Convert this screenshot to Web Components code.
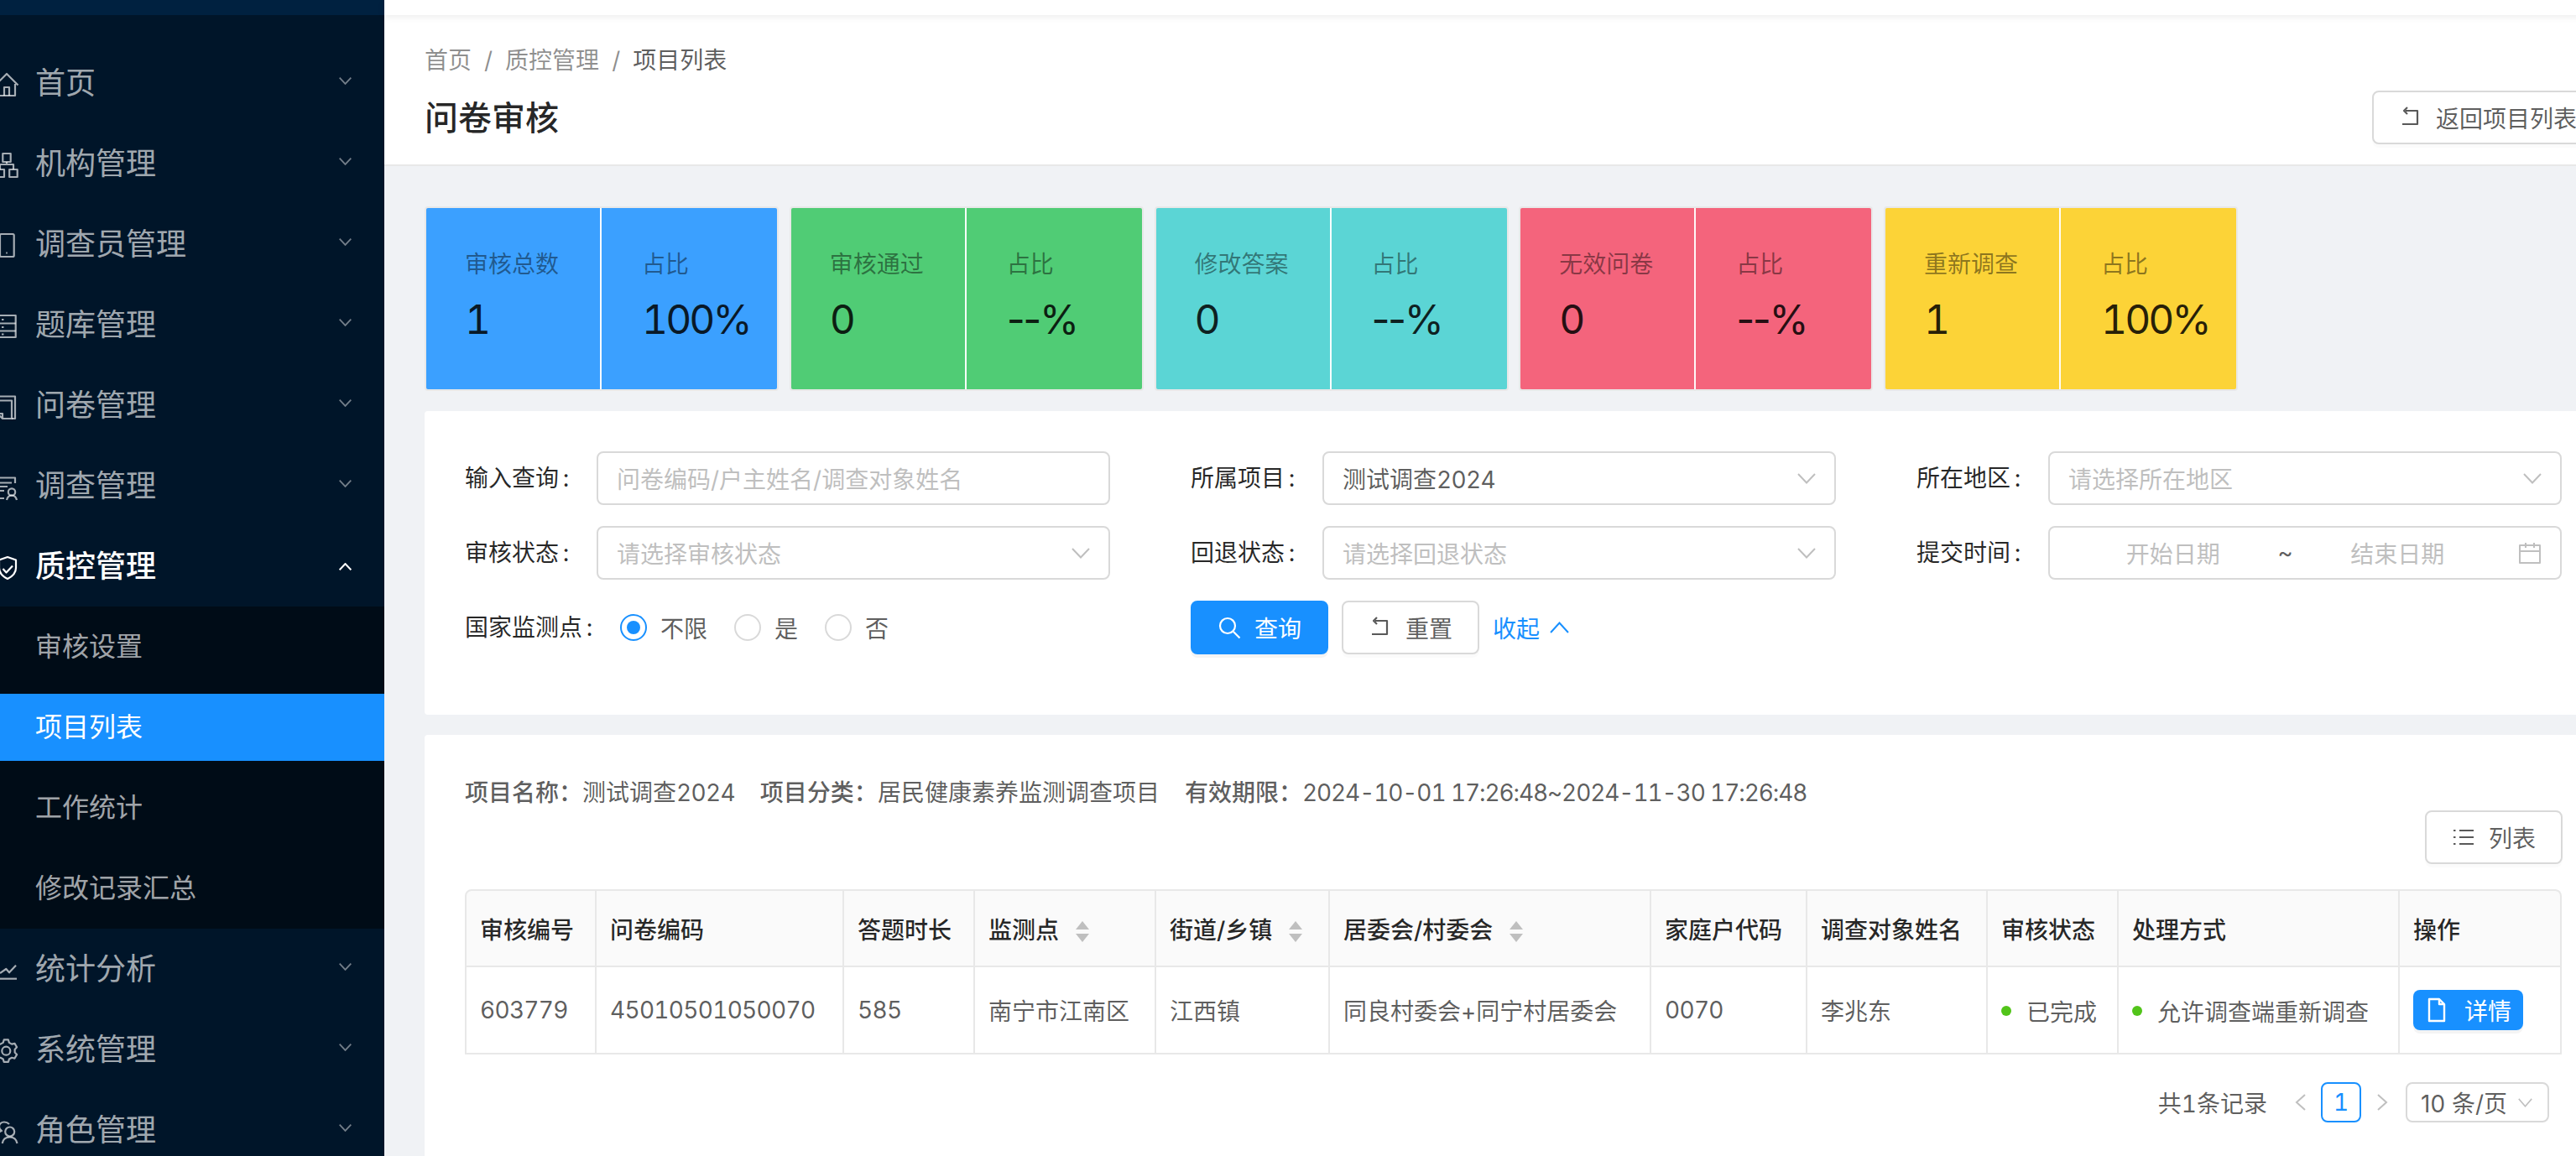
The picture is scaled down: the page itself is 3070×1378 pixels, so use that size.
<!DOCTYPE html>
<html lang="zh-CN">
<head>
<meta charset="utf-8">
<title>问卷审核</title>
<style>
html,body{margin:0;padding:0;width:3070px;height:1378px;overflow:hidden;background:#f0f2f5}
body{font-family:Inter,"Noto Sans CJK SC",sans-serif;font-size:28px;color:rgba(0,0,0,.65);font-variant-numeric:tabular-nums}
</style>
</head>
<body>
<app-shell>
  <side-nav slot="nav">
    <nav-item icon="home">首页</nav-item>
    <nav-item icon="cluster">机构管理</nav-item>
    <nav-item icon="tablet">调查员管理</nav-item>
    <nav-item icon="database">题库管理</nav-item>
    <nav-item icon="snippets">问卷管理</nav-item>
    <nav-item icon="solution">调查管理</nav-item>
    <nav-item icon="shield" open>质控管理</nav-item>
    <sub-menu>
      <sub-item>审核设置</sub-item>
      <sub-item active>项目列表</sub-item>
      <sub-item>工作统计</sub-item>
      <sub-item>修改记录汇总</sub-item>
    </sub-menu>
    <nav-item icon="chart">统计分析</nav-item>
    <nav-item icon="gear">系统管理</nav-item>
    <nav-item icon="team">角色管理</nav-item>
  </side-nav>
  <page-head>
    <span slot="c1">首页</span><span slot="c2">质控管理</span><span slot="c3">项目列表</span>
    <span slot="title">问卷审核</span>
    <ui-button slot="action" icon="rollback">返回项目列表</ui-button>
  </page-head>
  <stat-row>
    <stat-card color="#3ba0ff" label="审核总数" value="1" pct="100%"></stat-card>
    <stat-card color="#50cc75" label="审核通过" value="0" pct="--%"></stat-card>
    <stat-card color="#5bd5d5" label="修改答案" value="0" pct="--%"></stat-card>
    <stat-card color="#f4647c" label="无效问卷" value="0" pct="--%"></stat-card>
    <stat-card color="#fcd337" label="重新调查" value="1" pct="100%"></stat-card>
  </stat-row>
  <filter-panel>
    <form-field label="输入查询"><field-box placeholder>问卷编码/户主姓名/调查对象姓名</field-box></form-field>
    <form-field label="所属项目"><field-box arrow>测试调查<num-t>2024</num-t></field-box></form-field>
    <form-field label="所在地区"><field-box arrow placeholder>请选择所在地区</field-box></form-field>
    <form-field label="审核状态"><field-box arrow placeholder>请选择审核状态</field-box></form-field>
    <form-field label="回退状态"><field-box arrow placeholder>请选择回退状态</field-box></form-field>
    <form-field label="提交时间"><date-range></date-range></form-field>
    <form-field label="国家监测点"><radio-opt checked>不限</radio-opt><radio-opt>是</radio-opt><radio-opt>否</radio-opt></form-field>
    <action-row>
      <ui-button primary icon="search">查询</ui-button>
      <ui-button icon="rollback">重置</ui-button>
      <collapse-link>收起</collapse-link>
    </action-row>
  </filter-panel>
  <result-panel>
    <info-line slot="info">
      <info-pair label="项目名称：">测试调查<num-t>2024</num-t></info-pair>
      <info-pair label="项目分类：">居民健康素养监测调查项目</info-pair>
      <info-pair label="有效期限："><num-t style="--ls:-1.100px">2024-10-01 17:26:48~2024-11-30 17:26:48</num-t></info-pair>
    </info-line>
    <ui-button slot="tool" icon="list">列表</ui-button>
    <data-table slot="table"></data-table>
    <page-bar slot="pager"></page-bar>
  </result-panel>
</app-shell>

<script>
function gearPath(cx,cy){
  const pt=(r,d)=>{const a=d*Math.PI/180;return (cx+r*Math.cos(a)).toFixed(2)+' '+(cy+r*Math.sin(a)).toFixed(2);};
  let d='';
  for(let i=0;i<6;i++){
    const a=30+i*60;
    d+=(i?'L':'M')+pt(10.5,a-20)+'L'+pt(13.5,a-11)+'L'+pt(13.5,a+11)+'L'+pt(10.5,a+20);
  }
  return '<path d="'+d+'Z"/><circle cx="'+cx+'" cy="'+cy+'" r="5"/>';
}
const ICONS = {
  home:'<path d="M.5 16.500 14 3l13.500 13.500"/><path d="M3.500 15v14h20.500V15"/><path d="M11 29v-10h6v10"/>',
  cluster:'<rect x="9.300" y="2" width="9.400" height="10"/><rect x="1.500" y="21" width="9.500" height="9"/><rect x="17.200" y="21" width="9.500" height="9"/><path d="M14 12v3M6 21v-6h16v6"/>',
  tablet:'<rect x="6" y="2" width="16.700" height="27" rx="1.500"/><path d="M13.200 24.500h1.600"/>',
  database:'<rect x="-3" y="3" width="27.700" height="26"/><path d="M-3 12.500h27.700M-3 21.500h27.700M8 8h2.500M8 17h2.500M8 25.500h2.500"/>',
  snippets:'<path d="M6 3.500h18V30h-4"/><path d="M0 8.500h20V30H9l-6-6h6v6"/>',
  solution:'<path d="M0 4.500h24V11"/><path d="M0 10.500h20M0 15h15M0 20h11M0 29h11"/><circle cx="20" cy="21.500" r="4.200"/><path d="M14 31c1-4 3-5.500 6-5.500s5 1.500 6 5.500"/>',
  shield:'<path d="M15 3l10 3.500V16c0 7-6 11-10 13-4-2-10-6-10-13V6.500z"/><path d="m9.500 17 4 4.500 7.500-8"/>',
  chart:'<path d="M0 25.700h26"/><path d="M6 19l7.300-5 3.700 4.300 8-8.600"/>',
  gear:gearPath(13.300,15.700),
  team:'<circle cx="17.700" cy="16" r="5.500"/><path d="M8.700 30c.8-5 4.300-7.500 9-7.500s7.800 2.500 8.800 7.500"/><path d="M17 7c-2-2-3.500-2.500-6-2.500-4 0-6 3-6 5.500s1 4 3 5c-4 1.500-7 5-8 10"/>',
  rollback:'<path d="M8 6h14v16H4"/><path d="M10 2 6 6l4 4"/>',
  search:'<circle cx="12" cy="12" r="9"/><path d="m19 19 7.500 7.500"/>',
  list:'<path d="M9 6h17M9 14h17M9 22h17M2 6h2.500M2 14h2.500M2 22h2.500"/>',
  file:'<path d="M5 1h12l6 6v20H5z"/><path d="M17 1v6h6"/>',
  calendar:'<rect x="2" y="5" width="24" height="21"/><path d="M2 12h24M9 2v6M19 2v6"/>'
};
function def(name, css, html, init){
  customElements.define(name, class extends HTMLElement{
    constructor(){
      super();
      const root = this.attachShadow({mode:'open'});
      const body = typeof html === 'function' ? html(this) : html;
      root.innerHTML = '<style>'+css+'</style>'+body;
    }
    connectedCallback(){
      if(init && !this._ready){ this._ready = true; init(this, this.shadowRoot); }
    }
  });
}
def('num-t', ':host{display:inline;letter-spacing:var(--ls,-.7px)}', '<slot></slot>');
def('ui-icon',
  ':host{display:inline-flex;flex:none;width:var(--s,28px);height:var(--s,28px)} svg{width:100%;height:100%;fill:none;stroke:currentColor;stroke-width:var(--w,2);stroke-linejoin:round;display:block;overflow:visible}',
  '<svg viewBox="0 0 28 28" aria-hidden="true"></svg>',
  (el,r)=>{ r.querySelector('svg').innerHTML = ICONS[el.getAttribute('name')] || ''; });

def('chev-icon',
  ':host{display:inline-flex;flex:none;width:var(--cw,22px);height:var(--ch,13px)} svg{width:100%;height:100%;fill:none;stroke:currentColor;stroke-width:var(--w,2);display:block}',
  '<svg viewBox="0 0 22 13" preserveAspectRatio="none" aria-hidden="true"></svg>',
  (el,r)=>{ r.querySelector('svg').innerHTML = el.hasAttribute('up') ? '<path d="M1 12 11 1.500 21 12"/>' : '<path d="M1 1 11 11.500 21 1"/>'; });

def('app-shell',
  ':host{display:flex;width:3070px;height:1378px;overflow:hidden} .main{flex:none;width:2691px;background:#f0f2f5;min-width:0} .top{height:18px;background:#fff;box-shadow:0 2px 8px rgba(0,0,0,.08);position:relative}',
  '<slot name="nav"></slot><div class="main"><div class="top"></div><slot></slot></div>');

def('side-nav',
  ':host{display:block;flex:none;width:458px;height:1378px;background:#001529;overflow:hidden} .logo{height:18px;background:#002140;margin-bottom:41px} .list{display:flex;flex-direction:column}',
  '<div class="logo"></div><div class="list"><slot></slot></div>');

def('nav-item',
  ':host{display:flex;align-items:center;height:80px;margin-bottom:16px;font-size:36px;color:rgba(255,255,255,.65);flex:none} :host([open]){color:#fff;font-weight:500;margin-bottom:8px} ui-icon{margin-left:-6px;margin-right:20px;--w:2.200} .t{flex:1;white-space:nowrap;line-height:80px} chev-icon{--cw:15px;--ch:9px;--w:2.600;margin-right:39px;margin-top:-6px;color:rgba(255,255,255,.45)} :host([open]) chev-icon{color:#fff;--w:3;margin-top:0}',
  el=>'<ui-icon name="'+el.getAttribute('icon')+'"></ui-icon><span class="t"><slot></slot></span><chev-icon '+(el.hasAttribute('open')?'up':'')+'></chev-icon>');

def('sub-menu',
  ':host{display:flex;flex-direction:column;background:#000c17;padding:8px 0;margin-bottom:8px;gap:16px}',
  '<slot></slot>');

def('sub-item',
  ':host{display:block;height:80px;line-height:80px;padding-left:42px;font-size:32px;color:rgba(255,255,255,.65)} :host([active]){background:#1890ff;color:#fff}',
  '<slot></slot>');

def('page-head',
  ':host{display:block;background:#fff;border-bottom:2px solid #e8e8e8;padding:33px 46px 24px 48px} .crumb{display:flex;line-height:42px;color:rgba(0,0,0,.45);height:42px} .crumb i{font-style:normal;margin:0 15px} .last{color:rgba(0,0,0,.65)} .row{display:flex;justify-content:space-between;align-items:center;height:64px;margin-top:15px} .title{font-size:40px;font-weight:500;color:rgba(0,0,0,.85);line-height:64px;padding-top:2px}',
  '<div class="crumb"><slot name="c1"></slot><i>/</i><slot name="c2"></slot><i>/</i><span class="last"><slot name="c3"></slot></span></div><div class="row"><span class="title"><slot name="title"></slot></span><slot name="action"></slot></div>');

def('stat-row',
  ':host{display:flex;gap:12.750px;padding:48px 48px 24px}',
  '<slot></slot>');

def('stat-card',
  ':host{display:flex;flex:none;width:418px;height:216px;border:2px solid #e8e8e8;border-radius:4px;overflow:hidden;background:var(--c)} .h{flex:1;padding:46px 0 0 46px;box-sizing:border-box} .h+.h{border-left:2px solid rgba(255,255,255,.95);padding-left:48px} .l{line-height:42px;color:rgba(0,0,0,.45);font-size:28px} .v{line-height:90px;font-size:48px;color:rgba(0,0,0,.85);letter-spacing:-3px} .v.d{letter-spacing:-2.500px;font-variant-numeric:normal}',
  el=>{const p=el.getAttribute('pct');return '<div class="h"><div class="l">'+el.getAttribute('label')+'</div><div class="v">'+el.getAttribute('value')+'</div></div><div class="h"><div class="l">占比</div><div class="v'+(p[0]==='-'?' d':'')+'">'+p+'</div></div>';},
  el=>{el.style.setProperty('--c',el.getAttribute('color'));});

def('filter-panel',
  ':host{display:grid;grid-template-columns:repeat(3,1fr);column-gap:96px;row-gap:25px;background:#fff;margin:0 48px 24px;padding:48px 48px 72px;border-radius:4px}',
  '<slot></slot>');

def('form-field',
  ':host{display:flex;align-items:center;min-height:64px;min-width:0} .l{flex:none;color:rgba(0,0,0,.85);white-space:nowrap;line-height:64px} .c{display:inline-block;margin:0 30px 0 2px;width:13px;text-align:center} .b{flex:1;display:flex;align-items:center;min-width:0}',
  el=>'<span class="l">'+el.getAttribute('label')+'<span class="c">:</span></span><div class="b"><slot></slot></div>');

def('field-box',
  ':host{flex:1;display:flex;align-items:center;height:64px;box-sizing:border-box;border:2px solid #d9d9d9;border-radius:8px;padding:0 22px;background:#fff;color:rgba(0,0,0,.65);min-width:0} :host([placeholder]){color:#bfbfbf} .t{flex:1;white-space:nowrap} chev-icon{color:#bfbfbf}',
  el=>'<span class="t"><slot></slot></span>'+(el.hasAttribute('arrow')?'<chev-icon></chev-icon>':''));

def('date-range',
  ':host{flex:1;display:flex;align-items:center;height:64px;box-sizing:border-box;border:2px solid #d9d9d9;border-radius:8px;padding:0 22px 0 26px;color:#bfbfbf} .d{flex:1;text-align:center;white-space:nowrap} .s{flex:none;color:rgba(0,0,0,.65);width:26px;text-align:center} ui-icon{margin-left:23px}',
  '<span class="d">开始日期</span><span class="s">~</span><span class="d">结束日期</span><ui-icon name="calendar"></ui-icon>');

def('radio-opt',
  ':host{display:inline-flex;align-items:center;margin-right:16px} .r{width:32px;height:32px;box-sizing:border-box;border:2px solid #d9d9d9;border-radius:50%;flex:none;display:flex;align-items:center;justify-content:center} :host([checked]) .r{border-color:#1890ff} :host([checked]) .r::after{content:"";width:16px;height:16px;border-radius:50%;background:#1890ff} .t{padding:0 16px;white-space:nowrap}',
  '<span class="r"></span><span class="t"><slot></slot></span>');

def('action-row',
  ':host{display:flex;align-items:center;gap:16px}',
  '<slot></slot>');

def('ui-button',
  ':host{display:inline-flex;align-items:center;flex:none;height:64px;box-sizing:border-box;border:2px solid #d9d9d9;border-radius:8px;padding:0 30px;background:#fff;color:rgba(0,0,0,.65);box-shadow:0 4px 0 rgba(0,0,0,.015);white-space:nowrap} :host([primary]){background:#1890ff;border-color:#1890ff;color:#fff;box-shadow:0 4px 0 rgba(0,0,0,.045)} :host([slot=tool]){margin-right:-1px} ui-icon{margin-right:16px;--w:2.200}',
  el=>'<ui-icon name="'+el.getAttribute('icon')+'"></ui-icon><slot></slot>');

def('collapse-link',
  ':host{display:inline-flex;align-items:center;color:#1890ff} chev-icon{margin-left:12px;--cw:23px;--ch:14px}',
  '<slot></slot><chev-icon up></chev-icon>');

def('result-panel',
  ':host{display:block;background:#fff;margin:0 48px;padding:48px;border-radius:4px} .tool{display:flex;justify-content:flex-end;margin-bottom:30px}',
  '<slot name="info"></slot><div class="tool"><slot name="tool"></slot></div><slot name="table"></slot><slot name="pager"></slot>');

def('info-line',
  ':host{display:flex;gap:30px;line-height:42px;height:42px}',
  '<slot></slot>');

def('info-pair',
  ':host{display:inline-block;white-space:nowrap;color:rgba(0,0,0,.65)} b{font-weight:500}',
  el=>'<b>'+el.getAttribute('label')+'</b><slot></slot>');

const COLS=[157,295,156,216,207,383,186,215,156,335,193];
const HEAD=[['审核编号'],['问卷编码'],['答题时长'],['监测点',1],['街道/乡镇',1],['居委会/村委会',1],['家庭户代码'],['调查对象姓名'],['审核状态'],['处理方式'],['操作']];
def('sort-mark',
  ':host{display:inline-flex;flex-direction:column;gap:5px;margin-left:20px;vertical-align:middle} i{display:block;width:0;height:0;border-left:8px solid transparent;border-right:8px solid transparent} .u{border-bottom:10px solid #bfbfbf} .d{border-top:10px solid #bfbfbf}',
  '<i class="u"></i><i class="d"></i>');
def('status-dot',
  ':host{display:inline-flex;align-items:center;white-space:nowrap} i{width:12px;height:12px;border-radius:50%;background:#52c41a;margin-right:18px;flex:none}',
  '<i></i><slot></slot>');
def('data-table',
  ':host{display:block} table{border-collapse:separate;border-spacing:0;table-layout:fixed;width:2499px;font-size:28px} th,td{box-sizing:border-box;text-align:left;padding:0 16px;border-right:2px solid #e8e8e8;border-bottom:2px solid #e8e8e8;white-space:nowrap;overflow:visible} tr>*:first-child{border-left:2px solid #e8e8e8} th{height:93px;border-top:2px solid #e8e8e8;background:#fafafa;font-weight:500;color:rgba(0,0,0,.85)} th:first-child{border-top-left-radius:8px} th:last-child{border-top-right-radius:8px} td{height:104px;color:rgba(0,0,0,.65)}',
  '<table><colgroup>'+COLS.map(w=>'<col style="width:'+w+'px">').join('')+'</colgroup><thead><tr>'+HEAD.map(h=>'<th>'+h[0]+(h[1]?'<sort-mark></sort-mark>':'')+'</th>').join('')+'</tr></thead><tbody><tr><td><num-t>603779</num-t></td><td><num-t>45010501050070</num-t></td><td><num-t>585</num-t></td><td>南宁市江南区</td><td>江西镇</td><td>同良村委会+同宁村居委会</td><td><num-t>0070</num-t></td><td>李兆东</td><td><status-dot>已完成</status-dot></td><td><status-dot>允许调查端重新调查</status-dot></td><td><small-btn>详情</small-btn></td></tr></tbody></table>');
def('small-btn',
  ':host{display:inline-flex;align-items:center;height:48px;padding:0 14px;background:#1890ff;color:#fff;border-radius:8px;box-shadow:0 4px 0 rgba(0,0,0,.045);white-space:nowrap} ui-icon{margin-right:19px;--w:2.400}',
  '<ui-icon name="file"></ui-icon><slot></slot>');
def('page-bar',
  ':host{display:flex;justify-content:flex-end;align-items:center;height:48px;margin-top:33px;padding-right:15px} .total{margin-right:16px;white-space:nowrap} .p{width:48px;height:48px;box-sizing:border-box;display:flex;align-items:center;justify-content:center;color:#bfbfbf} .p svg{width:14px;height:20px;fill:none;stroke:currentColor;stroke-width:2} .n{border:2px solid #1890ff;border-radius:8px;color:#1890ff;margin-right:1px} .sel{display:flex;align-items:center;box-sizing:border-box;width:171px;height:48px;margin-left:4px;border:2px solid #d9d9d9;border-radius:8px;padding:0 18px 0 16px;white-space:nowrap} .sel span{flex:1;font-variant-numeric:normal} chev-icon{--cw:17px;--ch:11px;color:#bfbfbf}',
  '<span class="total">共1条记录</span><span class="p"><svg viewBox="0 0 14 20"><path d="M12 1 2 10l10 9"/></svg></span><span class="p n">1</span><span class="p"><svg viewBox="0 0 14 20"><path d="m2 1 10 9-10 9"/></svg></span><div class="sel"><span>10 条/页</span><chev-icon></chev-icon></div>');
</script>
</body>
</html>
